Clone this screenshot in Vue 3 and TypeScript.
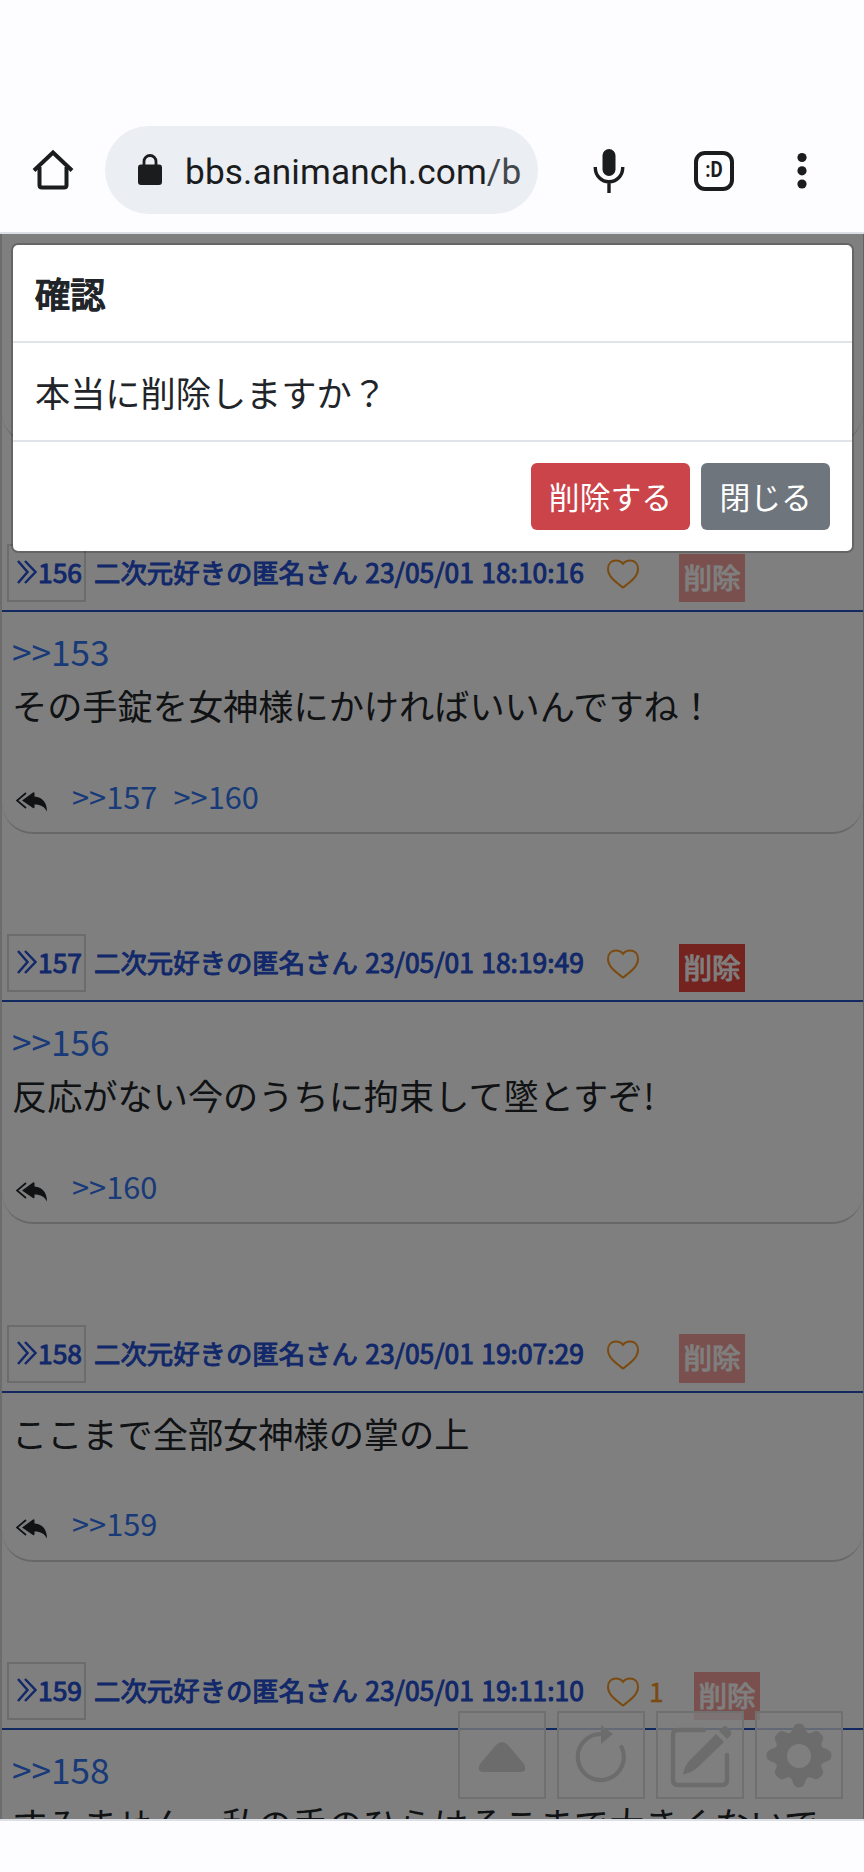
<script setup lang="ts">
interface Post {
  id: number
  time: string
  likes?: number
  deletable?: boolean
  anchor?: string
  text: string
  replies: string[]
}

const posts: Post[] = [
  { id: 156, time: '23/05/01 18:10:16', anchor: '>>153', text: 'その手錠を女神様にかければいいんですね！', replies: ['>>157', '>>160'] },
  { id: 157, time: '23/05/01 18:19:49', deletable: true, anchor: '>>156', text: '反応がない今のうちに拘束して墜とすぞ!', replies: ['>>160'] },
  { id: 158, time: '23/05/01 19:07:29', text: 'ここまで全部女神様の掌の上', replies: ['>>159'] },
  { id: 159, time: '23/05/01 19:11:10', likes: 1, anchor: '>>158', text: 'すみません、私の手のひらはそこまで大きくないで', replies: [] },
]
</script>

<template>
  <div class="screen">
    <header class="toolbar">
      <svg class="home" width="44" height="44" viewBox="0 0 44 44" fill="none" stroke="#1b1c1e" stroke-width="4">
        <path d="M3 21.5 22 3.5 41 21.5" stroke-linejoin="miter" />
        <path d="M8.5 18v18q0 2.5 2.500 2.500h22q2.500 0 2.500-2.500V18" />
      </svg>
      <div class="address">
        <svg width="24" height="32" viewBox="0 0 24 32">
          <path d="M6 12V7.500a6 6 0 0 1 12 0V12" fill="none" stroke="#1b1c1e" stroke-width="2.800" />
          <rect x="0" y="10.500" width="24" height="20.500" rx="3" fill="#1b1c1e" />
        </svg>
        <span class="url">bbs.animanch.com<i>/b</i></span>
      </div>
      <svg class="mic" width="32" height="46" viewBox="0 0 32 46" fill="none" stroke="#1b1c1e" stroke-width="3.400">
        <rect x="9.500" y="1" width="13" height="27" rx="6.500" fill="#1b1c1e" stroke="none" />
        <path d="M2.300 19v1a13.700 13.700 0 0 0 27.400 0v-1M16 34v11" />
      </svg>
      <div class="tabs"><span>:D</span></div>
      <svg class="dots" width="10" height="38" viewBox="0 0 10 38" fill="#1b1c1e">
        <circle cx="5" cy="5.500" r="4.600" /><circle cx="5" cy="18.800" r="4.600" /><circle cx="5" cy="32" r="4.600" />
      </svg>
    </header>

    <main class="viewport">
      <div class="thread">
        <div class="previous"></div>
        <article v-for="p in posts" :key="p.id" class="post">
          <div class="head">
            <span class="num">
              <svg width="20" height="24" viewBox="0 0 20 24" fill="none" stroke="#2450d4" stroke-width="2.500">
                <path d="M1 1l9.500 11L1 23M8 1l10.500 11L8 23" />
              </svg>{{ p.id }}
            </span>
            <span class="name">二次元好きの匿名さん {{ p.time }}</span>
            <svg class="heart" width="32" height="30" viewBox="0 0 32 30" fill="none" stroke="#f59622" stroke-width="2">
              <path d="M16 28.500C11 24.500 1 18.500 1 10 1 4.500 4.500 1.500 9 1.500c3 0 5.500 1.300 7 3.300 1.500-2 4-3.300 7-3.300 4.500 0 8 3 8 8.500 0 8.500-10 14.500-15 18.500z" />
            </svg>
            <span v-if="p.likes" class="likes">{{ p.likes }}</span>
            <span class="del" :class="{ faded: !p.deletable }">削除</span>
          </div>
          <div class="body">
            <a v-if="p.anchor" class="anchor">{{ p.anchor }}</a>
            <p>{{ p.text }}</p>
            <div v-if="p.replies.length" class="replies">
              <svg width="32" height="20" viewBox="0 0 32 20">
                <path d="M10 1 1 8.500 10 16" fill="none" stroke="#212529" stroke-width="1.700" />
                <path d="M6 8.500 17 .5q1.500-1 1.500 1v3C26 5 31 10 31 19.500 28 14.500 25 12.500 18.500 12.500V15q0 2-1.500 1z" fill="#212529" />
              </svg>
              <a v-for="r in p.replies" :key="r">{{ r }}</a>
            </div>
          </div>
        </article>
      </div>

      <nav class="tools">
        <span>
          <svg viewBox="0 0 84 84"><path d="M36 32q6-6 12 0l16 19q4 8-4 8H24q-8 0-4-8z" fill="#d8d8d8" /></svg>
        </span>
        <span>
          <svg viewBox="0 0 84 84">
            <path d="M42 21A23 23 0 1 0 62.500 34" fill="none" stroke="#d8d8d8" stroke-width="4.200" stroke-linecap="round" />
            <path d="M42 12 54 21 42 31z" fill="#d8d8d8" />
          </svg>
        </span>
        <span>
          <svg viewBox="0 0 84 84">
            <path d="M46 17H20q-5 0-5 5v45q0 5 5 5h44q5 0 5-5V42" fill="none" stroke="#d8d8d8" stroke-width="4.500" stroke-linecap="round" />
            <path d="M58 21 66 29 39 55Q33 60 25 61.500 26 54 31 48zM61 18l4-4q2-2 4 0l3 3q2 2 1 5l-4 4z" fill="#d8d8d8" />
          </svg>
        </span>
        <span>
          <svg viewBox="0 0 84 84">
            <path fill="#d8d8d8" fill-rule="evenodd" d="M42 10.500c5 0 5.500 3.500 7 7 1.500 3 3.500 3.500 6 2 4-2.500 6-2 8.700 1.200 2.800 2.800 3.200 5 1.300 8.300-1.500 3-.8 4.800 2 6 3.500 1.500 7.500 2.500 7.500 7.500s-4 5.500-7.500 7c-2.800 1.200-3.500 3-2 6 1.900 3.500 1.500 5.500-1.300 8.300-2.700 2.700-4.700 3.200-8.700 1.200-2.500-1.300-4.500-.8-6 2-1.500 3.500-2 7.500-7 7.500s-5.500-4-7-7.500c-1.500-2.800-3.500-3.300-6-2-4 2-6 1.500-8.700-1.200-2.800-2.800-3.200-4.800-1.300-8.300 1.500-3 .8-4.800-2-6-3.500-1.500-7.500-2-7.500-7s4-6 7.500-7.500c2.800-1.200 3.500-3 2-6-1.900-3.300-1.500-5.500 1.300-8.300 2.700-3.200 4.700-3.700 8.700-1.200 2.500 1.500 4.500 1 6-2 1.500-3.500 2-7 7-7zM42 31a12 12 0 1 0 0 24 12 12 0 0 0 0-24z" />
          </svg>
        </span>
      </nav>

      <div class="backdrop">
        <section class="modal">
          <h5>確認</h5>
          <p>本当に削除しますか？</p>
          <footer>
            <button class="danger">削除する</button>
            <button class="secondary">閉じる</button>
          </footer>
        </section>
      </div>
    </main>
  </div>
</template>

<style>
html, body { margin: 0; background: #fdfdff; }
</style>

<style scoped>
.screen {
  width: 864px;
  height: 1872px;
  overflow: hidden;
  background: #fdfdff;
  font-family: "Noto Sans CJK JP", "Noto Sans", sans-serif;
  color: #212529;
}
.toolbar {
  box-sizing: border-box;
  height: 234px;
  padding-top: 108px;
  border-bottom: 2px solid #dcdfe6;
  display: flex;
  align-items: center;
}
.home { margin: 2px 0 0 31px; }
.address {
  box-sizing: border-box;
  width: 433px;
  height: 88px;
  margin: 0 55px 0 30px;
  padding-left: 33px;
  border-radius: 44px;
  background: #ebeef3;
  display: flex;
  align-items: center;
}
.url {
  margin: 3px 0 0 23px;
  font: 400 35.2px/44px Roboto, sans-serif;
  letter-spacing: 0.120px;
  color: #1b1c1e;
}
.url i { font-style: normal; color: #44474b; }
.mic { margin-top: 1px; }
.tabs {
  box-sizing: border-box;
  width: 40px;
  height: 40px;
  margin: 2px 63px 0 69px;
  border: 4px solid #1b1c1e;
  border-radius: 11px;
  font: 700 22px/30px Roboto, sans-serif;
  text-align: center;
  color: #1b1c1e;
}
.tabs span { display: block; transform: scaleX(0.850); }
.dots { margin-top: 2px; }
.viewport {
  position: relative;
  height: 1585px;
  overflow: hidden;
  background: #fff;
  border-bottom: 2px solid #dcdfe6;
}
.thread {
  box-sizing: border-box;
  height: 1585px;
  overflow: hidden;
  border-left: 2px solid #d8d8d8;
  border-right: 1px solid #c4c4c4;
}
.previous {
  box-sizing: border-box;
  height: 209.500px;
  border-bottom: 2px solid #d0d0d0;
  border-radius: 0 0 31px 31px;
}
.post {
  margin-top: 88.500px;
  border-bottom: 2px solid #d0d0d0;
  border-radius: 0 0 31px 31px;
}
.head {
  box-sizing: border-box;
  height: 80px;
  padding: 0 0 8px 5px;
  border-bottom: 2px solid #2450c0;
  display: flex;
  align-items: flex-end;
  white-space: nowrap;
  color: #2450d4;
  font-size: 26.400px;
  line-height: 40px;
}
.num {
  box-sizing: border-box;
  width: 79px;
  height: 58px;
  padding: 0 0 2px 8px;
  border: 2px solid #d8d8d8;
  display: flex;
  align-items: center;
  gap: 1px;
}
.num, .name { -webkit-text-stroke: 1px #2450d4; }
.num svg { flex: none; }
.name { margin: 0 0 10px 8px; width: 489px; word-spacing: 1.500px; }
.heart { flex: none; margin: 0 0 13px 24px; }
.likes { margin: 0 0 9px 10px; width: 14px; color: #f59622; -webkit-text-stroke: 0.500px #f59622; }
.del {
  margin-left: 40px;
  padding: 0 4.400px;
  height: 48.500px;
  background: #ea463e;
  color: #fff;
  font-size: 28.600px;
  line-height: 46.500px;
  -webkit-text-stroke: 1px #fff;
}
.likes + .del { margin-left: 31px; }
.faded { opacity: 0.500; }
.body { padding: 14px 10px 13px; }
.anchor, .body p {
  display: block;
  margin: 0;
  font-size: 35.200px;
  line-height: 52.800px;
  white-space: nowrap;
}
.body .anchor { margin: -1px 0 1px; }
.anchor, .replies a { color: #3074f0; }
.replies {
  display: flex;
  align-items: center;
  margin-top: 41px;
  height: 46.200px;
  font-size: 30.800px;
  line-height: 46px;
}
.replies svg { margin: 12px 24px 0 4px; }
.replies a { margin-right: 16px; }
.tools {
  position: absolute;
  left: 458px;
  top: 1477px;
  display: flex;
  gap: 11px;
}
.tools span {
  width: 84px;
  height: 84px;
  border: 2px solid #e0e0e0;
  background: rgba(255, 255, 255, 0.750);
}
.tools svg { display: block; width: 84px; height: 84px; }
.backdrop {
  position: absolute;
  inset: 0;
  background: rgba(0, 0, 0, 0.500);
  padding: 9px 10px 0 11px;
}
.modal {
  border: 2px solid rgba(0, 0, 0, 0.200);
  background: #fff;
  background-clip: padding-box;
  border-radius: 7px;
}
.modal h5, .modal p {
  box-sizing: border-box;
  height: 98px;
  margin: 0;
  padding: 22px;
  border-bottom: 2px solid #e0e3e9;
  font-size: 35.200px;
  line-height: 52.800px;
  font-weight: 400;
}
.modal h5 { -webkit-text-stroke: 1.500px #212529; }
.modal p { height: 99px; padding-top: 23px; }
.modal footer {
  display: flex;
  justify-content: flex-end;
  gap: 11px;
  padding: 21px 22px;
}
button {
  height: 67px;
  padding: 0 18.200px 2px;
  border: 0;
  border-radius: 6px;
  color: #fff;
  font: 400 30.800px/64px "Noto Sans CJK JP", sans-serif;
}
.danger { background: #cb444a; }
.secondary { background: #6e757d; }
</style>
